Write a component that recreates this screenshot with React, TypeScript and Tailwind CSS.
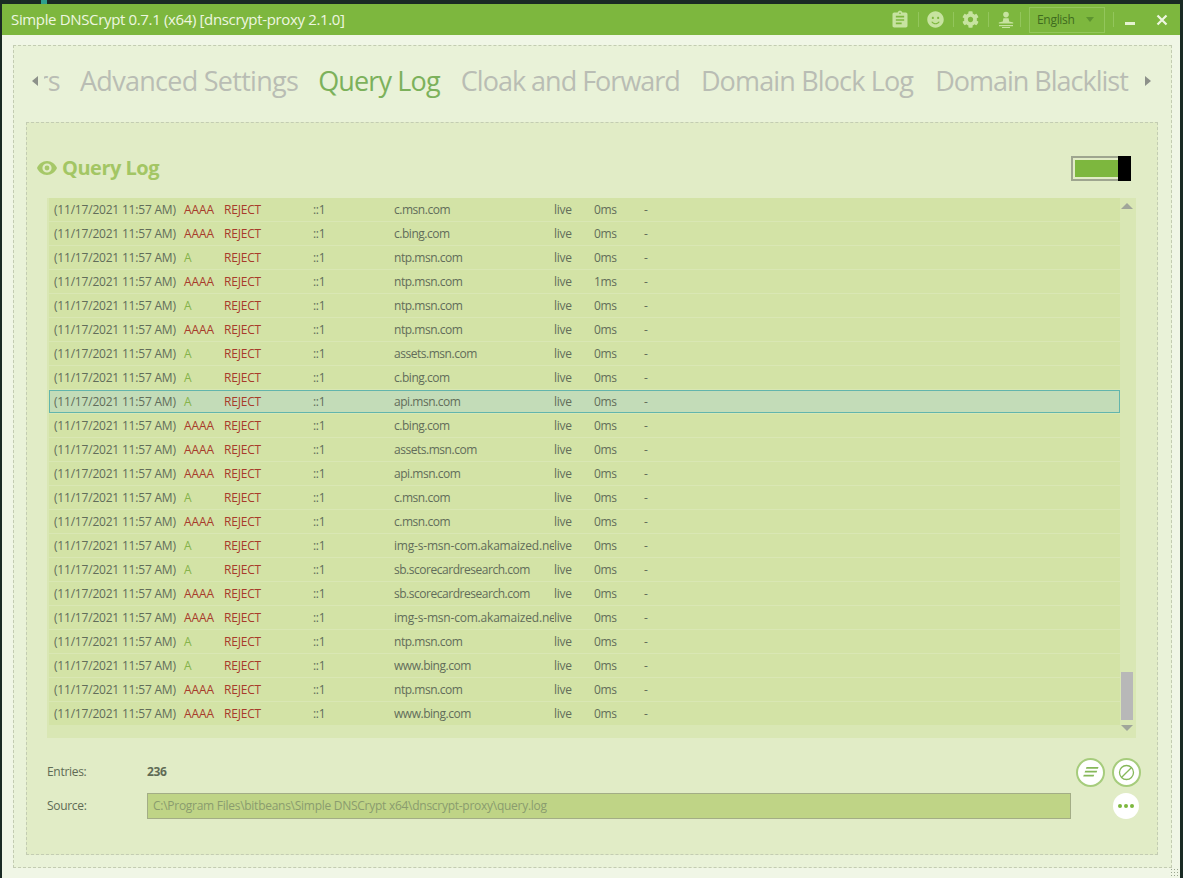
import { FaCog, FaSmile } from "react-icons/fa";
import { MdAssignment } from "react-icons/md";

const font = { fontFamily: '"Open Sans", "Noto Sans", sans-serif' };

type Row = [string, string, string];

const ROWS: Row[] = [
  ["AAAA", "c.msn.com", "0ms"],
  ["AAAA", "c.bing.com", "0ms"],
  ["A", "ntp.msn.com", "0ms"],
  ["AAAA", "ntp.msn.com", "1ms"],
  ["A", "ntp.msn.com", "0ms"],
  ["AAAA", "ntp.msn.com", "0ms"],
  ["A", "assets.msn.com", "0ms"],
  ["A", "c.bing.com", "0ms"],
  ["A", "api.msn.com", "0ms"],
  ["AAAA", "c.bing.com", "0ms"],
  ["AAAA", "assets.msn.com", "0ms"],
  ["AAAA", "api.msn.com", "0ms"],
  ["A", "c.msn.com", "0ms"],
  ["AAAA", "c.msn.com", "0ms"],
  ["A", "img-s-msn-com.akamaized.net", "0ms"],
  ["A", "sb.scorecardresearch.com", "0ms"],
  ["AAAA", "sb.scorecardresearch.com", "0ms"],
  ["AAAA", "img-s-msn-com.akamaized.net", "0ms"],
  ["A", "ntp.msn.com", "0ms"],
  ["A", "www.bing.com", "0ms"],
  ["AAAA", "ntp.msn.com", "0ms"],
  ["AAAA", "www.bing.com", "0ms"],
];

function Sep() {
  return <div className="h-[15px] w-px bg-[#93c65c]" />;
}

function LogRow({ row, selected }: { row: Row; selected: boolean }) {
  const [type, host, time] = row;
  const long = host.startsWith("img");
  return (
    <div
      className={
        "flex h-[23px] items-center text-[12px] tracking-[-0.3px] text-[#626d5a] " +
        (selected ? "border border-[#62b5ac] bg-[#c3dcb8] pl-[4px]" : "bg-[#d3e3a6] pl-[5px]")
      }
    >
      <span className="w-[130px] shrink-0 whitespace-nowrap tracking-[-0.2px]">(11/17/2021 11:57 AM)</span>
      <span className={"w-[40px] shrink-0 tracking-[-0.05px] " + (type === "A" ? "text-[#86b34a]" : "text-[#a83b2b]")}>
        {type}
      </span>
      <span className="w-[89px] shrink-0 tracking-[-0.2px] text-[#a83b2b]">REJECT</span>
      <span className="w-[81px] shrink-0">::1</span>
      <span className={"w-[160px] shrink-0 overflow-hidden whitespace-nowrap " + (long ? "tracking-[-0.2px]" : "tracking-[-0.47px]")}>
        {host}
      </span>
      <span className="w-[40px] shrink-0">live</span>
      <span className="w-[50px] shrink-0">{time}</span>
      <span>-</span>
    </div>
  );
}

export default function App() {
  return (
    <div className="relative h-[878px] w-[1183px] overflow-hidden bg-[#1a2a24] pl-[2px] pr-[3px] pt-[4px]" style={font}>
      <div className="absolute left-[41px] top-0 h-[4px] w-[6px] bg-[#2fa08c]" />
      <div className="flex h-[874px] flex-col">
        <header className="flex h-[31px] shrink-0 items-center bg-[#7db73e] pl-[9px] pr-[8px] text-white">
          <span className="text-[15px] tracking-[-0.35px] text-[#eef6e0]">
            Simple DNSCrypt 0.7.1 (x64) [dnscrypt-proxy 2.1.0]
          </span>
          <div className="ml-auto flex items-center gap-[8px] text-[#c7e3a0]">
            <MdAssignment size={20} />
            <Sep />
            <FaSmile size={17} className="mr-[1px]" />
            <Sep />
            <FaCog size={17} className="mr-[1px]" />
            <Sep />
            <svg width="18" height="18" viewBox="0 0 18 18" fill="currentColor" className="-mr-[3px]">
              <circle cx="9" cy="3.6" r="2.8" />
              <path d="M6.4 7.2h5.2l.6 3.2 4 1.2v.9H1.8v-.9l4-1.2z" />
              <path d="M2 14h14v1.2H2z" />
              <path d="M5 16h8v1H5z" />
            </svg>
            <Sep />
            <div className="flex h-[26px] w-[76px] items-center justify-between border border-[#93c65c] pl-[7px] pr-[10px] text-[12px] tracking-[-0.3px] text-[#3f6b1f]">
              English
              <span className="h-0 w-0 border-x-[4px] border-t-[5px] border-x-transparent border-t-[#5d9430]" />
            </div>
            <Sep />
            <div className="ml-[3px] mt-[8px] h-[3px] w-[10px] bg-[#e4f2d0]" />
            <svg width="12" height="12" viewBox="0 0 12 12" className="ml-[13px] mr-[4px]" stroke="#eef6e0" strokeWidth="2.200">
              <path d="M1.500 1.500l9 9M10.500 1.500l-9 9" />
            </svg>
          </div>
        </header>

        <main className="relative min-h-0 flex-1 bg-[#f0f6e6] pl-[11px] pr-[8px] pt-[10px]">
          <div className="h-[823px] border border-dashed border-[#c3ccb2] bg-[#e9f2d8] pl-[12px] pr-[13px]">
            <nav className="flex h-[76px] items-center pb-[6px] text-[27px] text-[#b9bdb4]">
              <span className="ml-[6px] h-0 w-0 border-y-[5px] border-r-[6px] border-y-transparent border-r-[#8d918a]" />
              <span className="ml-[6px] flex w-[16px] justify-end overflow-hidden whitespace-nowrap tracking-[-0.6px]">rs</span>
              <span className="ml-[20px] whitespace-nowrap tracking-[-0.72px]">Advanced Settings</span>
              <span className="ml-[20px] whitespace-nowrap tracking-[-0.85px] text-[#7cb15b]">Query Log</span>
              <span className="ml-[21px] whitespace-nowrap tracking-[-1px]">Cloak and Forward</span>
              <span className="ml-[21px] whitespace-nowrap tracking-[-0.85px]">Domain Block Log</span>
              <span className="ml-[22px] whitespace-nowrap tracking-[-1px]">Domain Blacklist</span>
              <span className="ml-auto mr-[7px] h-0 w-0 border-y-[5px] border-l-[6px] border-y-transparent border-l-[#8d918a]" />
            </nav>

            <section className="h-[733px] border border-dashed border-[#c3ccb2] bg-[#e1ecc6] pl-[20px] pr-[19px]">
              <div className="-ml-[10px] flex h-[75px] items-center pt-[16px]">
                <svg width="20" height="14" viewBox="0 0 20 14" fill="#a6c868" className="-mt-[2px]">
                  <path d="M10 0C5.5 0 1.7 2.9 0 7c1.7 4.1 5.5 7 10 7s8.300-2.900 10-7c-1.700-4.100-5.500-7-10-7zm0 11.600A4.600 4.600 0 1 1 10 2.400a4.600 4.600 0 0 1 0 9.200zM10 4.600a2.400 2.400 0 1 0 0 4.800 2.400 2.400 0 0 0 0-4.800z" />
                </svg>
                <span className="-mt-[2px] ml-[5px] text-[20px] font-bold tracking-[-0.5px] text-[#a3c664]">Query Log</span>
                <div className="ml-auto mr-[7px] flex h-[25px] w-[60px] items-stretch">
                  <div className="flex-1 border-y-2 border-l-2 border-[#9ea58f] py-[2px] pl-[2px]">
                    <div className="h-full bg-[#7db73e]" />
                  </div>
                  <div className="w-[13px] bg-black" />
                </div>
              </div>

              <div className="flex h-[540px] w-[1089px] bg-[#d9e7b4] pl-[2px]">
                <div className="flex w-[1071px] flex-col gap-px">
                  {ROWS.map((row, i) => (
                    <LogRow key={i} row={row} selected={i === 8} />
                  ))}
                </div>
                <div className="flex w-[14px] flex-col items-center">
                  <span className="mt-[5px] h-0 w-0 border-x-[6px] border-b-[6px] border-x-transparent border-b-[#a0a69a]" />
                  <div className="mt-[463px] h-[48px] w-[12px] bg-[#b8b8b8]" />
                  <span className="mt-[5px] h-0 w-0 border-x-[6px] border-t-[6px] border-x-transparent border-t-[#a0a69a]" />
                </div>
              </div>

              <div className="mt-[18px] flex h-[32px] items-center text-[12px] tracking-[-0.3px] text-[#5f6b55]">
                <span className="w-[100px]">Entries:</span>
                <span className="font-bold">236</span>
                <div className="-mr-[3px] ml-auto flex items-center gap-[7px]">
                  <div className="flex h-[29px] w-[29px] items-center justify-center rounded-full border-2 border-[#a6cc7c] bg-white">
                    <svg width="16" height="12" viewBox="0 0 16 12" fill="#86b85a">
                      <path d="M3.500 1h12l-.6 1.800h-12zM2.200 4.800h12l-.6 1.800h-12zM.8 8.800h10.400l-.6 1.800H.2z" />
                    </svg>
                  </div>
                  <div className="flex h-[29px] w-[29px] items-center justify-center rounded-full border-2 border-[#a6cc7c] bg-white">
                    <svg width="17" height="17" viewBox="0 0 17 17" fill="none" stroke="#86b85a" strokeWidth="1.300">
                      <circle cx="8.500" cy="8.500" r="7" />
                      <path d="M3.700 13.300l9.600-9.600" />
                    </svg>
                  </div>
                </div>
              </div>

              <div className="mt-[5px] flex h-[26px] items-center text-[12px] tracking-[-0.3px] text-[#5f6b55]">
                <span className="w-[100px] shrink-0">Source:</span>
                <div className="flex h-[26px] w-[924px] shrink-0 items-center whitespace-nowrap border border-[#a3ad86] bg-[#bfd486] pl-[5px] text-[12px] tracking-[-0.27px] text-[#8a9c6e]">
                  C:\Program Files\bitbeans\Simple DNSCrypt x64\dnscrypt-proxy\query.log
                </div>
                <div className="ml-[42px] flex h-[26px] w-[26px] shrink-0 items-center justify-center gap-[2px] rounded-full bg-white">
                  <span className="h-[4px] w-[4px] rounded-full bg-[#7db73e]" />
                  <span className="h-[4px] w-[4px] rounded-full bg-[#7db73e]" />
                  <span className="h-[4px] w-[4px] rounded-full bg-[#7db73e]" />
                </div>
              </div>
            </section>
          </div>
          <div className="absolute bottom-0 right-0 h-[10px] w-[10px] bg-[radial-gradient(#9aa590_1px,transparent_1px)] bg-[length:3px_3px]" />
        </main>
      </div>
    </div>
  );
}
